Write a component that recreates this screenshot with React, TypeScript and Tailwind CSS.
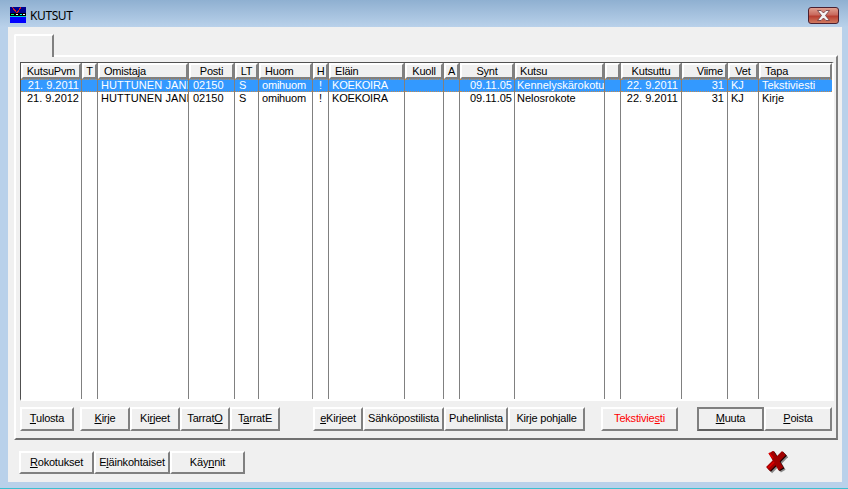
import React from "react";

type Col = { w: string; head: string; hc: string; c: string; a?: string; b?: string };

const cols: Col[] = [
  { w: "w-[61px]", head: "KutsuPvm", hc: "justify-center", c: "justify-end pr-[2px] tracking-[0px]", a: "21. 9.2011", b: "21. 9.2012" },
  { w: "w-[16px]", head: "T", hc: "justify-center", c: "" },
  { w: "w-[91px]", head: "Omistaja", hc: "pl-[4px]", c: "pl-[3px] tracking-[0.1px]", a: "HUTTUNEN JANI", b: "HUTTUNEN JANI" },
  { w: "w-[46px]", head: "Posti", hc: "justify-center", c: "pl-[4px] tracking-[0px]", a: "02150", b: "02150" },
  { w: "w-[24px]", head: "LT", hc: "justify-center", c: "pl-[4px]", a: "S", b: "S" },
  { w: "w-[54px]", head: "Huom", hc: "pl-[4px]", c: "pl-[3px] tracking-[-0.2px]", a: "omihuom", b: "omihuom" },
  { w: "w-[16px]", head: "H", hc: "justify-center", c: "justify-center", a: "!", b: "!" },
  { w: "w-[76px]", head: "Eläin", hc: "pl-[4px]", c: "pl-[3px] tracking-[-0.2px]", a: "KOEKOIRA", b: "KOEKOIRA" },
  { w: "w-[39px]", head: "Kuoll", hc: "justify-center", c: "" },
  { w: "w-[16px]", head: "A", hc: "justify-center", c: "" },
  { w: "w-[55px]", head: "Synt", hc: "justify-center", c: "justify-end pr-[2px] tracking-[0px]", a: "09.11.05", b: "09.11.05" },
  { w: "w-[90px]", head: "Kutsu", hc: "pl-[3px]", c: "pl-[2px] tracking-[0px]", a: "Kennelyskärokotus", b: "Nelosrokote" },
  { w: "w-[16px]", head: "", hc: "", c: "" },
  { w: "w-[61px]", head: "Kutsuttu", hc: "justify-center", c: "justify-end pr-[3px] tracking-[0px]", a: "22. 9.2011", b: "22. 9.2011" },
  { w: "w-[46px]", head: "Viime", hc: "justify-end pr-[2px]", c: "justify-end pr-[3px]", a: "31", b: "31" },
  { w: "w-[31px]", head: "Vet", hc: "justify-center", c: "pl-[3px]", a: "KJ", b: "KJ" },
  { w: "w-[73px]", head: "Tapa", hc: "pl-[4px]", c: "pl-[3px]", a: "Tekstiviesti", b: "Kirje" },
];

const bevel =
  "border-t-[2px] border-l-[2px] border-r-[2px] border-b-[2px] border-t-white border-l-white border-r-[#808080] border-b-[#808080]";

function Btn({ w, children, extra = "" }: { w: string; children: React.ReactNode; extra?: string }) {
  return (
    <button className={`${w} h-[24px] shrink-0 flex items-center justify-center bg-[#f0f0f0] ${bevel} text-[11px] tracking-[-0.2px] leading-none text-black ${extra}`}>
      <span className="-mt-[1px]">{children}</span>
    </button>
  );
}

function KillIcon() {
  return (
    <svg width="23" height="23" viewBox="0 0 23 23" className="block">
      <g fill="none" strokeWidth="5.5" strokeLinecap="butt">
        <g stroke="#8a8a8a" transform="translate(2.2 2.2)">
          <path d="M6 1 L16 18" />
          <path d="M19 2 L3 18" />
        </g>
        <g stroke="#1a0000" transform="translate(1 0.8)">
          <path d="M6 1 L16 18" />
          <path d="M19 2 L3 18" />
        </g>
        <g stroke="#a00000">
          <path d="M6 1 L16 18" />
          <path d="M19 2 L3 18" />
        </g>
      </g>
      <path d="M4 2 L8 7 M3 17 L9 11" stroke="#e00000" strokeWidth="1.6" fill="none" />
    </svg>
  );
}

export default function App() {
  return (
    <div
      className="w-[848px] h-[489px] flex flex-col overflow-hidden bg-[linear-gradient(to_bottom,#8fb0d1,#b9d1ea_27px)] text-black"
      style={{ fontFamily: '"Liberation Sans", Arial, sans-serif' }}
    >
      {/* Title bar */}
      <div className="h-[27px] shrink-0 flex items-start pl-[10px] pr-[9px] pt-[7px]">
        <svg width="16" height="16" viewBox="0 0 16 16" shapeRendering="crispEdges" className="shrink-0">
          <rect width="16" height="16" fill="#0000ff" />
          <rect y="0" width="16" height="6" fill="#000090" />
          <path d="M2 0 L7 6 L11 0" fill="none" stroke="#d02020" strokeWidth="1" />
          <rect y="6" width="16" height="3" fill="#000000" />
          <rect y="9" width="16" height="1" fill="#00d0d0" />
          <rect x="1" y="7" width="3" height="1" fill="#00ff80" />
          <rect x="6" y="7" width="2" height="1" fill="#ffffff" />
          <rect x="10" y="7" width="2" height="1" fill="#00ffff" />
          <rect x="13" y="7" width="2" height="1" fill="#ffffff" />
        </svg>
        <span className="ml-[4px] mt-[1px] text-[12px] tracking-[-0.4px] leading-[16px] text-black" style={{ fontFamily: '"Noto Sans", sans-serif' }}>KUTSUT</span>
        <div className="ml-auto w-[31px] h-[17px] rounded-[3px] border border-[#4a2030] bg-[linear-gradient(to_bottom,#e0a090,#c96a5e_45%,#b83e30_55%,#d07a60)] flex items-center justify-center">
          <svg width="15" height="11" viewBox="0 0 15 11">
            <path d="M1.5 0.5 h3.5 l2.5 2.5 L10 0.5 h3.5 L9.5 5.5 L13.5 10.5 H10 L7.5 8 L5 10.5 H1.5 L5.5 5.5 Z" fill="#f4f4f4" stroke="#6a3a40" strokeWidth="0.8" />
          </svg>
        </div>
      </div>

      {/* Client area */}
      <div className="ml-[8px] mr-[6px] h-[455px] shrink-0 bg-[#f0f0f0] flex flex-col pl-[6px] pt-[7px]">
        {/* Tab */}
        <div className="h-[21px] shrink-0 flex">
          <div className="relative z-10 w-[40px] h-[23px] rounded-tl-[2px] border-t-[2px] border-l-[2px] border-r-[2px] border-t-white border-l-white border-r-[#808080] bg-[#f0f0f0]" />
        </div>
        {/* Tab page */}
        <div className="w-[824px] h-[385px] shrink-0 flex flex-col border-t-[2px] border-l-[2px] border-r-[2px] border-b-[2px] border-t-white border-l-white border-r-[#808080] border-b-[#707070] pl-[4px] pt-[5px]">
          {/* List */}
          <div className="w-[814px] h-[339px] shrink-0 bg-white flex border-t-[1px] border-l-[1px] border-b-[2px] border-r-[2px] border-t-[#505050] border-l-[#505050] border-b-white border-r-white">
            {cols.map((c, i) => (
              <div key={i} className={`${c.w} shrink-0 h-full flex flex-col ${i < cols.length - 1 ? "border-r border-r-[#808080]" : ""}`}>
                <div className={`h-[16px] shrink-0 flex items-center bg-[#f0f0f0] ${bevel} text-[11px] tracking-[-0.2px] leading-none whitespace-nowrap overflow-hidden ${c.hc}`}>
                  {c.head}
                </div>
                <div className={`h-[13px] shrink-0 flex items-center bg-[#3399ff] text-white text-[11px] leading-none whitespace-nowrap overflow-hidden border-y border-dotted border-y-[#c08a50] ${c.c}`}>
                  {c.a}
                </div>
                <div className={`h-[13px] shrink-0 flex items-center text-[11px] leading-none whitespace-nowrap overflow-hidden ${c.c}`}>
                  {c.b}
                </div>
              </div>
            ))}
          </div>

          {/* Buttons row */}
          <div className="flex mt-[6px]">
            <Btn w="w-[54px]"><u>T</u>ulosta</Btn>
            <div className="w-[6px]" />
            <Btn w="w-[50px]"><u>K</u>irje</Btn>
            <Btn w="w-[50px]">Ki<u>r</u>jeet</Btn>
            <Btn w="w-[50px]">Tarrat<u>O</u></Btn>
            <Btn w="w-[50px]">T<u>a</u>rratE</Btn>
            <div className="w-[33px]" />
            <Btn w="w-[50px]"><u>e</u>Kirjeet</Btn>
            <Btn w="w-[81px]">Sähköpostilista</Btn>
            <Btn w="w-[64px]">Puhelinlista</Btn>
            <Btn w="w-[77px]">Kirje pohjalle</Btn>
            <div className="w-[16px]" />
            <Btn w="w-[77px]" extra="!text-[#ff0000]">Tekstivie<u>s</u>ti</Btn>
            <div className="w-[19px]" />
            <Btn w="w-[67px]" extra="border-[2px] !border-[#808080] !border-b-[#606060]"><u>M</u>uuta</Btn>
            <Btn w="w-[68px]"><u>P</u>oista</Btn>
          </div>
        </div>

        {/* Bottom row */}
        <div className="flex items-start mt-[11px] ml-[5px]">
          <Btn w="w-[75px]" extra="!h-[23px]"><u>R</u>okotukset</Btn>
          <Btn w="w-[76px]" extra="!h-[23px]">E<u>l</u>äinkohtaiset</Btn>
          <Btn w="w-[75px]" extra="!h-[23px]">Käy<u>n</u>nit</Btn>
          <div className="ml-[520px]">
            <KillIcon />
          </div>
        </div>
      </div>
      <div className="flex-1" />
      <div className="h-[1px] shrink-0 bg-[#3cc0d0]" />
    </div>
  );
}
